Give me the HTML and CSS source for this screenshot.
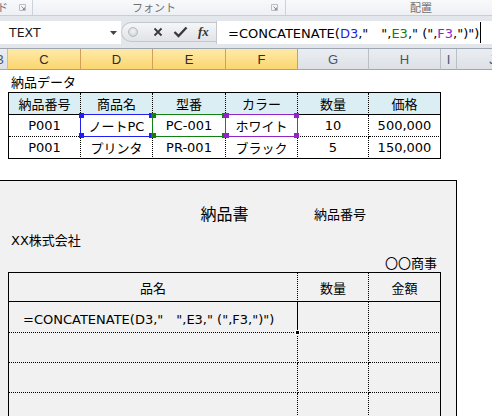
FILE: index.html
```html
<!DOCTYPE html>
<html lang="ja">
<head>
<meta charset="utf-8">
<title>納品書</title>
<link rel="stylesheet" href="styles.css">
</head>
<body>
<div class="ribbon">
  <div class="grp g-clip">
    <span class="glabel cut">ド</span>
    <svg class="launch" viewBox="0 0 7 7"><path d="M0.5 0.5H6.5V6.5H0.5Z" fill="none" stroke="#b9bec5"/><path d="M2.5 2.5L5.5 5.5M5.5 3.5V5.5H3.5" fill="none" stroke="#8a9099"/></svg>
  </div>
  <div class="grp g-font">
    <span class="glabel">フォント</span>
    <svg class="launch" viewBox="0 0 7 7"><path d="M0.5 0.5H6.5V6.5H0.5Z" fill="none" stroke="#b9bec5"/><path d="M2.5 2.5L5.5 5.5M5.5 3.5V5.5H3.5" fill="none" stroke="#8a9099"/></svg>
  </div>
  <div class="grp g-align"><span class="glabel">配置</span></div>
</div>

<div class="fbar">
  <div class="namebox">
    <span>TEXT</span>
    <svg class="dd" viewBox="0 0 7 4"><path d="M0 0H7L3.5 4Z" fill="#444"/></svg>
  </div>
  <div class="fbtns">
    <span class="knob"></span>
    <svg class="ic-x" viewBox="0 0 10 10"><path d="M1.5 1.5L8.5 8.5M8.5 1.5L1.5 8.5" stroke="#3a3a3a" stroke-width="1.8" fill="none"/></svg>
    <svg class="ic-ok" viewBox="0 0 15 12"><path d="M1.5 6L5.5 10L13.5 1.5" stroke="#3a3a3a" stroke-width="2.4" fill="none"/></svg>
    <span class="fx">fx</span>
  </div>
  <div class="finput">
    <span class="ftext">=CONCATENATE(<span class="rb">D3</span>,"　",<span class="rg">E3</span>," (",<span class="rp">F3</span>,")")</span><span class="caret"></span>
  </div>
</div>

<div class="cols">
  <div class="col c-b"><span>B</span></div>
  <div class="col sel c-c">C</div>
  <div class="col sel c-d">D</div>
  <div class="col sel c-e">E</div>
  <div class="col sel c-f">F</div>
  <div class="col c-g">G</div>
  <div class="col c-h">H</div>
  <div class="col c-i">I</div>
  <div class="col c-j">J</div>
</div>

<div class="sheet">
  <div class="title">納品データ</div>
  <div class="data">
    <div class="h">納品番号</div>
    <div class="h">商品名</div>
    <div class="h">型番</div>
    <div class="h">カラー</div>
    <div class="h">数量</div>
    <div class="h last">価格</div>

    <div>P001</div>
    <div>ノートPC<span class="hl hb"><i class="tl"></i><i class="tr"></i><i class="bl"></i><i class="br"></i></span></div>
    <div>PC-001<span class="hl hg"><i class="tl"></i><i class="tr"></i><i class="bl"></i><i class="br"></i></span></div>
    <div>ホワイト<span class="hl hp"><i class="tl"></i><i class="tr"></i><i class="bl"></i><i class="br"></i></span></div>
    <div>10</div>
    <div class="last">500,000</div>

    <div class="bot">P001</div>
    <div class="bot">プリンタ</div>
    <div class="bot">PR-001</div>
    <div class="bot">ブラック</div>
    <div class="bot">5</div>
    <div class="bot last">150,000</div>
  </div>
  <div class="gap"></div>

  <div class="form">
    <div class="f-row1">
      <span class="doc-title">納品書</span>
      <span class="doc-no">納品番号</span>
    </div>
    <div class="f-row2">XX株式会社</div>
    <div class="f-row3">〇〇商事</div>
    <div class="items">
      <div class="ih">品名</div>
      <div class="ih">数量</div>
      <div class="ih last">金額</div>

      <div class="r1 active">=CONCATENATE(D3,"　",E3," (",F3,")")<span class="handle"></span></div>
      <div class="r1"></div>
      <div class="r1 last"></div>

      <div></div><div></div><div class="last"></div>
      <div></div><div></div><div class="last"></div>
      <div></div><div></div><div class="last"></div>
    </div>
  </div>
</div>
</body>
</html>
```

FILE: styles.css
```css
* { box-sizing: border-box; margin: 0; padding: 0; }
html, body { width: 492px; height: 416px; overflow: hidden; background: #fff; }
body {
  font-family: "DejaVu Sans", "Noto Sans CJK JP", sans-serif;
  font-size: 13px;
  color: #000;
}

/* ribbon strip */
.ribbon {
  display: flex;
  height: 16px;
  background: linear-gradient(#f8f9fb, #edf0f4);
  border-bottom: 1px solid #c9ced6;
  overflow: hidden;
}
.grp {
  display: flex;
  align-items: center;
  height: 15px;
  border-right: 1px solid #cdd2d9;
}
.g-clip { width: 33px; justify-content: space-between; padding-right: 6px; }
.g-font { width: 253px; justify-content: space-between; padding-left: 99px; padding-right: 7px; }
.g-align { flex: 1; padding-left: 124px; border-right: none; }
.glabel {
  font-family: "Noto Sans CJK JP", sans-serif;
  font-size: 11px;
  line-height: 15px;
  color: #707070;
}
.cut { margin-left: -3px; color: #7a6e70; }
.launch { width: 7px; height: 7px; display: block; }

/* formula bar */
.fbar {
  display: flex;
  height: 32px;
  padding-top: 5px;
  background: #e3e7ec;
}
.namebox {
  width: 121px;
  height: 23px;
  background: #fff;
  display: flex;
  align-items: center;
  justify-content: space-between;
  padding: 0 4px 0 9px;
  font-size: 12.5px;
  color: #1a1a1a;
}
.dd { width: 7px; height: 4px; display: block; }
.fbtns {
  width: 95px;
  height: 20px;
  margin-top: 1px;
  display: flex;
  align-items: center;
  padding-left: 6px;
  border: 1px solid #c3c8cf;
  border-right: none;
  border-radius: 10px 0 0 10px;
  background: linear-gradient(#f5f6f8, #e0e3e7);
}
.knob {
  width: 10px;
  height: 10px;
  border-radius: 50%;
  border: 1px solid #b5bac0;
  background: radial-gradient(circle at 50% 40%, #f4f4f4, #c8cbcf);
}
.ic-x { width: 10px; height: 10px; margin-left: 15px; display: block; }
.ic-ok { width: 15px; height: 12px; margin-left: 10px; display: block; }
.fx {
  margin-left: 10px;
  font-family: "Liberation Serif", serif;
  font-style: italic;
  font-weight: bold;
  font-size: 13px;
  color: #333;
}
.finput {
  flex: 1;
  height: 23px;
  background: #fff;
  border-left: 1px solid #c3c8cf;
  display: flex;
  align-items: center;
  padding-left: 11px;
  white-space: nowrap;
  overflow: hidden;
  font-size: 13px;
}
.rb { color: #1f1fe0; }
.rg { color: #1b7b1b; }
.rp { color: #8e24c8; }
.caret { width: 1px; height: 21px; background: #000; margin-left: 1px; flex: none; }

/* column headers */
.cols {
  display: flex;
  height: 22px;
  border-top: 1px solid #9ea6b1;
  overflow: hidden;
}
.col {
  flex: none;
  height: 21px;
  display: flex;
  align-items: center;
  justify-content: center;
  font-family: "Liberation Sans", sans-serif;
  font-size: 13px;
  color: #44566e;
  background: linear-gradient(#eaedf1, #dde1e6);
  border-right: 1px solid #b9bfc7;
  border-bottom: 1px solid #9ea6b1;
}
.col.sel {
  background: linear-gradient(#feeaa8, #fbd670);
  border-right-color: #d2a055;
  border-bottom-color: #d99a3a;
  color: #2b2b2b;
}
.c-b { width: 8px; justify-content: flex-end; overflow: hidden; padding-right: 3px; }
.c-b span { flex: none; }
.c-c { width: 73px; }
.c-d { width: 72px; }
.c-e { width: 73px; }
.c-f { width: 72px; }
.c-g { width: 71px; }
.c-h { width: 72px; }
.c-i { width: 16px; }
.c-j { width: 72px; }

/* sheet */
.title {
  height: 22px;
  display: flex;
  align-items: center;
  padding-left: 11px;
}
.data {
  margin-left: 8px;
  width: 433px;
  display: grid;
  grid-template-columns: 72px 72px 73px 72px 71px 72px;
  border-left: 1px solid #000;
  border-top: 1px solid #000;
}
.data > div {
  position: relative;
  height: 22px;
  display: flex;
  align-items: center;
  justify-content: center;
  border-right: 1px dotted #000;
  border-bottom: 1px dotted #000;
}
.data > .h { background: #daeef3; border-bottom-style: solid; }
.data > .last { border-right-style: solid; }
.data > .bot { border-bottom-style: solid; }

.hl {
  position: absolute;
  inset: -1px;
  border: 1px solid currentColor;
  z-index: 2;
}
.hl i { position: absolute; width: 5px; height: 5px; background: currentColor; }
.hl .tl { left: -2px; top: -2px; }
.hl .tr { right: -2px; top: -2px; }
.hl .bl { left: -2px; bottom: -2px; }
.hl .br { right: -2px; bottom: -2px; }
.hb { color: #1f1ff0; }
.hg { color: #128012; }
.hp { color: #9024c8; }

.gap { height: 21px; }

/* delivery note form */
.form {
  width: 457px;
  height: 240px;
  background: #f1f1f1;
  border-top: 1px solid #000;
  border-right: 1px solid #000;
  padding-top: 19px;
}
.f-row1 {
  height: 26px;
  display: grid;
  grid-template-columns: 8px 72px 72px 73px 72px 71px 72px;
  align-items: center;
}
.doc-title {
  grid-column: 4 / 6;
  justify-self: center;
  font-size: 16px;
  font-family: "Noto Sans CJK JP", sans-serif;
}
.doc-no {
  grid-column: 6 / 8;
  padding-left: 17px;
}
.f-row2 {
  height: 26px;
  display: flex;
  align-items: center;
  padding-left: 11px;
}
.f-row3 {
  height: 20px;
  display: flex;
  align-items: center;
  justify-content: flex-end;
  padding-right: 19px;
}
.items {
  margin-left: 8px;
  width: 433px;
  display: grid;
  grid-template-columns: 289px 71px 72px;
  border-left: 1px solid #000;
  border-top: 1px solid #000;
}
.items > div {
  height: 30px;
  border-right: 1px dotted #000;
  border-bottom: 1px dotted #000;
}
.items > .ih {
  height: 29px;
  border-bottom-style: solid;
  display: flex;
  align-items: center;
  justify-content: center;
}
.items > .r1 { height: 31px; }
.items > .last { border-right-style: solid; }
.items > .active {
  position: relative;
  border-right-style: solid;
  display: flex;
  align-items: flex-end;
  padding: 0 0 4px 14px;
  line-height: 16px;
  font-size: 13px;
  white-space: nowrap;
}
.handle {
  position: absolute;
  right: -3px;
  bottom: -3px;
  width: 5px;
  height: 5px;
  background: #000;
  border: 1px solid #fff;
}
```
